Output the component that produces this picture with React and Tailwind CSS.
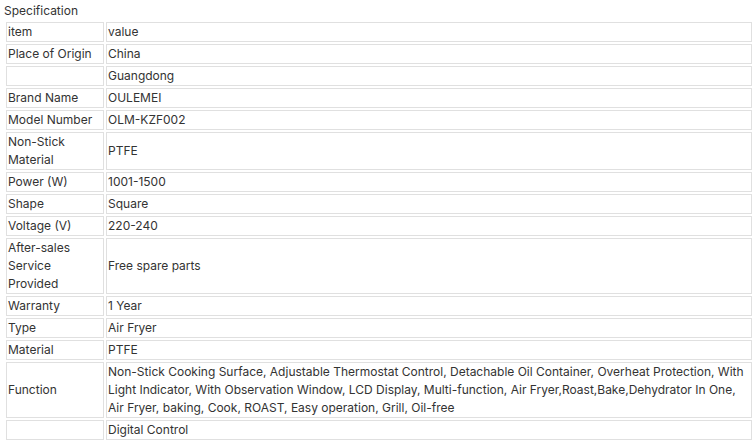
import React from 'react'

const rows = [
  ['item', 'value'],
  ['Place of Origin', 'China'],
  ['', 'Guangdong'],
  ['Brand Name', 'OULEMEI'],
  ['Model Number', 'OLM-KZF002'],
  ['Non-Stick Material', 'PTFE'],
  ['Power (W)', '1001-1500'],
  ['Shape', 'Square'],
  ['Voltage (V)', '220-240'],
  ['After-sales Service Provided', 'Free spare parts'],
  ['Warranty', '1 Year'],
  ['Type', 'Air Fryer'],
  ['Material', 'PTFE'],
  [
    'Function',
    'Non-Stick Cooking Surface, Adjustable Thermostat Control, Detachable Oil Container, Overheat Protection, With Light Indicator, With Observation Window, LCD Display, Multi-function, Air Fryer,Roast,Bake,Dehydrator In One, Air Fryer, baking, Cook, ROAST, Easy operation, Grill, Oil-free',
  ],
  ['', 'Digital Control'],
]

const App = () => {
  return (
    <div className="min-h-[443px] bg-white pt-[2px] text-[12px] leading-[18px] text-[#333] font-['Inter','Liberation_Sans',sans-serif]">
      <div className="pl-[4px]">Specification</div>
      <table className="ml-[4px] w-[750px] table-fixed border-separate border-spacing-[2px]">
        <tbody>
          {rows.map(([k, v], i) => (
            <tr key={i}>
              <td className="w-[98px] border border-[#e0e0e0] px-px py-0 align-middle">{k}</td>
              <td className="border border-[#e0e0e0] px-px py-0 align-middle">{v}</td>
            </tr>
          ))}
        </tbody>
      </table>
    </div>
  )
}

export default App
